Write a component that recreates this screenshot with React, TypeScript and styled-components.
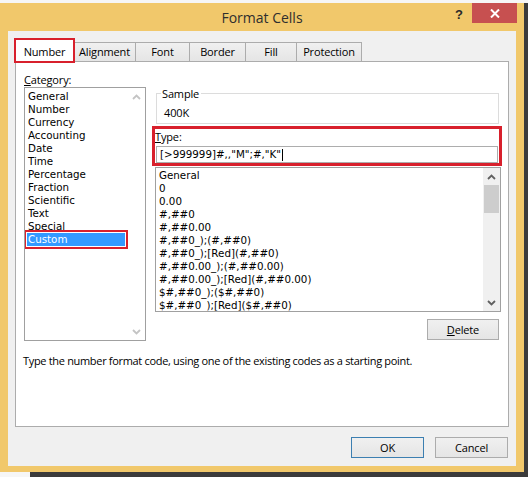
import React from "react";
import styled, { createGlobalStyle } from "styled-components";

const uiFont = `"Open Sans", "Noto Sans", Arial, sans-serif`;
const listFont = `"DejaVu Sans", Verdana, sans-serif`;
const red = "#d8202c";

const GlobalStyle = createGlobalStyle`
  html, body {
    margin: 0;
    padding: 0;
  }
  body {
    background: #f6f6f6;
    font-family: ${uiFont};
    color: #000;
  }
`;

const Desktop = styled.div`
  width: 528px;
  height: 477px;
  padding-top: 3px;
  box-sizing: border-box;
  overflow: hidden;
`;

const Window = styled.div`
  position: relative;
  width: 524px;
  height: 469px;
  background: #f1c86b;
  display: flex;
  flex-direction: column;
  box-shadow: 4px 0 0 #3b3b3b;
  &::after {
    content: "";
    position: absolute;
    left: 30px;
    right: -4px;
    top: 100%;
    height: 6px;
    background: #3b3b3b;
  }
`;

const TitleBar = styled.div`
  height: 28px;
  display: grid;
  grid-template-columns: 1fr auto 1fr;
  align-items: center;
`;

const Title = styled.div`
  grid-column: 2;
  font-size: 14px;
  color: #2e2e2e;
  padding-top: 1px;
`;

const Controls = styled.div`
  grid-column: 3;
  justify-self: end;
  align-self: start;
  display: flex;
  margin-right: 7px;
`;

const HelpButton = styled.div`
  width: 26px;
  height: 20px;
  display: flex;
  align-items: center;
  justify-content: center;
  font-family: "Liberation Sans", Arial, sans-serif;
  font-weight: bold;
  font-size: 13px;
  color: #2a2a2a;
  padding-top: 3px;
  box-sizing: border-box;
`;

const CloseButton = styled.div`
  width: 45px;
  height: 20px;
  background: #c75050;
  display: flex;
  align-items: center;
  justify-content: center;
`;

const Client = styled.div`
  flex: 1;
  margin: 0 8px 6px;
  background: #f0f0f0;
  padding: 8px 7px 0 7px;
  display: flex;
  flex-direction: column;
  font-size: 11px;
  letter-spacing: -0.15px;
`;

const TabStrip = styled.div`
  height: 22px;
  display: flex;
  align-items: flex-end;
`;

const Tab = styled.div<{ $w: number; $active?: boolean }>`
  position: relative;
  width: ${({ $w }) => $w}px;
  height: ${({ $active }) => ($active ? 23 : 19)}px;
  margin-bottom: ${({ $active }) => ($active ? -1 : 0)}px;
  box-sizing: border-box;
  border: 1px solid #acacac;
  border-bottom: none;
  background: ${({ $active }) =>
    $active ? "#fff" : "linear-gradient(#f0f0f0, #e5e5e5)"};
  z-index: ${({ $active }) => ($active ? 2 : 1)};
  outline: ${({ $active }) => ($active ? `2px solid ${red}` : "none")};
  outline-offset: -1px;
  line-height: 17px;
  text-align: center;
  padding-top: ${({ $active }) => ($active ? 3 : 0)}px;
  & + & {
    margin-left: -1px;
  }
`;

const Panel = styled.div`
  height: 366px;
  box-sizing: border-box;
  background: #fff;
  border: 1px solid #acacac;
  padding: 10px 7px 0 8px;
`;

const Columns = styled.div`
  display: flex;
  gap: 9px;
`;

const LeftColumn = styled.div`
  width: 122px;
  display: flex;
  flex-direction: column;
`;

const RightColumn = styled.div`
  width: 346px;
  padding-top: 15px;
  display: flex;
  flex-direction: column;
`;

const Label = styled.div`
  line-height: 15px;
`;

const ListBox = styled.div<{ $h: number; $gap?: number }>`
  height: ${({ $h }) => $h}px;
  margin-top: ${({ $gap = 0 }) => $gap}px;
  box-sizing: border-box;
  border: 1px solid #a0a0a0;
  display: flex;
  overflow: hidden;
`;

const Items = styled.div<{ $top: number }>`
  flex: 1;
  padding-top: ${({ $top }) => $top}px;
  overflow: hidden;
`;

const Row = styled.div<{ $selected?: boolean; $inset: number }>`
  height: 13px;
  line-height: 13px;
  font-family: ${listFont};
  font-size: 10.3px;
  letter-spacing: 0;
  white-space: nowrap;
  margin: 0 3px 0 ${({ $inset }) => $inset}px;
  padding-left: ${({ $inset }) => 3 - $inset}px;
  background: ${({ $selected }) => ($selected ? "#3399ff" : "transparent")};
  color: ${({ $selected }) => ($selected ? "#fff" : "#000")};
  outline: ${({ $selected }) => ($selected ? `2px solid ${red}` : "none")};
  outline-offset: 1px;
`;

const ScrollBar = styled.div<{ $disabled?: boolean }>`
  width: 17px;
  background: ${({ $disabled }) => ($disabled ? "#fff" : "#f0f0f0")};
  display: flex;
  flex-direction: column;
`;

const ArrowButton = styled.div`
  height: 17px;
  display: flex;
  align-items: center;
  justify-content: center;
`;

const Thumb = styled.div`
  height: 28px;
  margin: 0 1px;
  background: #cdcdcd;
`;

const Track = styled.div`
  flex: 1;
`;

const GroupBox = styled.fieldset`
  margin: 0 2px 0 1px;
  padding: 6px 6px 4px 7px;
  border: 1px solid #dcdcdc;
  min-inline-size: 0;
`;

const Legend = styled.legend`
  margin-left: -3px;
  padding: 0 2px 0 1px;
  line-height: 13px;
`;

const SampleValue = styled.div`
  line-height: 13px;
`;

const TypeBox = styled.div`
  margin-top: 5px;
  width: 344px;
  outline: 3px solid ${red};
  outline-offset: 0px;
`;

const Input = styled.div`
  margin: 2px 0 0 1px;
  width: 342px;
  height: 17px;
  box-sizing: border-box;
  border: 1px solid #adadad;
  padding-left: 3px;
  font-family: ${listFont};
  font-size: 10.3px;
  letter-spacing: 0;
  line-height: 15px;
  white-space: nowrap;
  display: flex;
  align-items: center;
`;

const Caret = styled.span`
  display: inline-block;
  width: 1px;
  height: 12px;
  background: #000;
  margin-left: 1px;
`;

const Button = styled.div<{ $w: number; $default?: boolean }>`
  width: ${({ $w }) => $w}px;
  height: 21px;
  box-sizing: border-box;
  border: 1px solid ${({ $default }) => ($default ? "#3c7fb1" : "#acacac")};
  background: linear-gradient(#f0f0f0, #e5e5e5);
  line-height: 19px;
  text-align: center;
`;

const DeleteRow = styled.div`
  margin-top: 7px;
  display: flex;
  justify-content: flex-end;
  padding-right: 2px;
`;

const Description = styled.div`
  margin: 12px 0 0 -1px;
  line-height: 15px;
  letter-spacing: -0.32px;
`;

const ButtonRow = styled.div`
  margin-top: 10px;
  display: flex;
  justify-content: flex-end;
  gap: 11px;
  padding-right: 1px;
`;

const Chevron: React.FC<{ down?: boolean; color: string }> = ({ down, color }) => (
  <svg width="9" height="6" viewBox="0 0 9 6">
    <polyline
      points={down ? "1,1 4.5,4.5 8,1" : "1,5 4.5,1.5 8,5"}
      fill="none"
      stroke={color}
      strokeWidth="1.8"
    />
  </svg>
);

const categories = [
  "General",
  "Number",
  "Currency",
  "Accounting",
  "Date",
  "Time",
  "Percentage",
  "Fraction",
  "Scientific",
  "Text",
  "Special",
  "Custom",
];

const formats = [
  "General",
  "0",
  "0.00",
  "#,##0",
  "#,##0.00",
  "#,##0_);(#,##0)",
  "#,##0_);[Red](#,##0)",
  "#,##0.00_);(#,##0.00)",
  "#,##0.00_);[Red](#,##0.00)",
  "$#,##0_);($#,##0)",
  "$#,##0_);[Red]($#,##0)",
];

const tabs: [string, number][] = [
  ["Number", 59],
  ["Alignment", 63],
  ["Font", 55],
  ["Border", 57],
  ["Fill", 52],
  ["Protection", 66],
];

export default function App() {
  return (
    <>
      <GlobalStyle />
      <Desktop>
        <Window>
          <TitleBar>
            <Title>Format Cells</Title>
            <Controls>
              <HelpButton>?</HelpButton>
              <CloseButton>
                <svg width="10" height="9" viewBox="0 0 10 9">
                  <path d="M1 0.5 L9 8.5 M9 0.5 L1 8.5" stroke="#fff" strokeWidth="2" />
                </svg>
              </CloseButton>
            </Controls>
          </TitleBar>
          <Client>
            <TabStrip>
              {tabs.map(([name, w], i) => (
                <Tab key={name} $w={w} $active={i === 0}>
                  {name}
                </Tab>
              ))}
            </TabStrip>
            <Panel>
              <Columns>
                <LeftColumn>
                  <Label>
                    <u>C</u>ategory:
                  </Label>
                  <ListBox $h={254}>
                    <Items $top={2}>
                      {categories.map(c => (
                        <Row key={c} $inset={2} $selected={c === "Custom"}>
                          {c}
                        </Row>
                      ))}
                    </Items>
                    <ScrollBar $disabled>
                      <ArrowButton>
                        <Chevron color="#c4c4c4" />
                      </ArrowButton>
                      <Track />
                      <ArrowButton>
                        <Chevron down color="#c4c4c4" />
                      </ArrowButton>
                    </ScrollBar>
                  </ListBox>
                </LeftColumn>
                <RightColumn>
                  <GroupBox>
                    <Legend>Sample</Legend>
                    <SampleValue>400K</SampleValue>
                  </GroupBox>
                  <TypeBox>
                    <Label>
                      <u>T</u>ype:
                    </Label>
                    <Input>
                      [&gt;999999]#,,"M";#,"K"
                      <Caret />
                    </Input>
                  </TypeBox>
                  <ListBox $h={145} $gap={4}>
                    <Items $top={1}>
                      {formats.map(f => (
                        <Row key={f} $inset={0}>
                          {f}
                        </Row>
                      ))}
                    </Items>
                    <ScrollBar>
                      <ArrowButton>
                        <Chevron color="#606060" />
                      </ArrowButton>
                      <Thumb />
                      <Track />
                      <ArrowButton>
                        <Chevron down color="#606060" />
                      </ArrowButton>
                    </ScrollBar>
                  </ListBox>
                  <DeleteRow>
                    <Button $w={72}>
                      <u>D</u>elete
                    </Button>
                  </DeleteRow>
                </RightColumn>
              </Columns>
              <Description>
                Type the number format code, using one of the existing codes as a starting point.
              </Description>
            </Panel>
            <ButtonRow>
              <Button $w={73} $default>
                OK
              </Button>
              <Button $w={73}>Cancel</Button>
            </ButtonRow>
          </Client>
        </Window>
      </Desktop>
    </>
  );
}
